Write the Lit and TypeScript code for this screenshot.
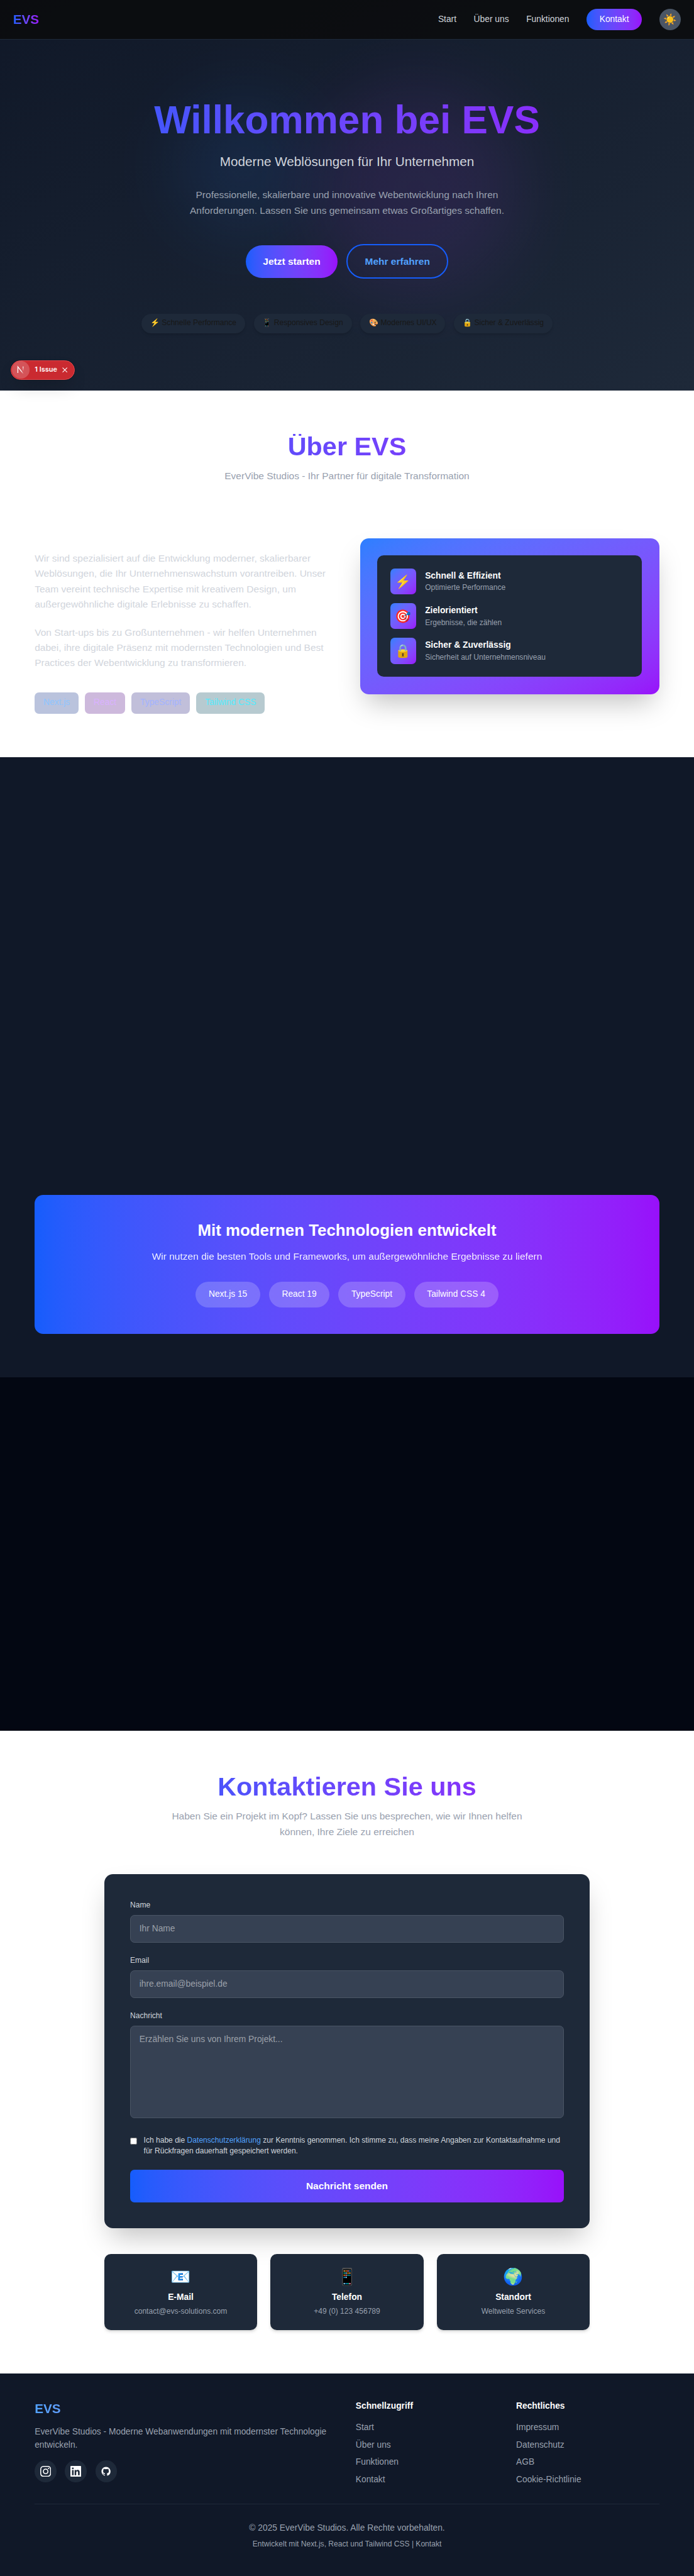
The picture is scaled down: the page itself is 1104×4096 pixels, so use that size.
import { LitElement, html, css, svg, unsafeCSS } from "lit";
import { customElement } from "lit/decorators.js";

const NAV_LINKS = ["Start", "Über uns", "Funktionen"];
const BADGES = [
  "⚡ Schnelle Performance",
  "📱 Responsives Design",
  "🎨 Modernes UI/UX",
  "🔒 Sicher & Zuverlässig",
];
const STRENGTHS = [
  { icon: "⚡", title: "Schnell & Effizient", text: "Optimierte Performance" },
  { icon: "🎯", title: "Zielorientiert", text: "Ergebnisse, die zählen" },
  { icon: "🔒", title: "Sicher & Zuverlässig", text: "Sicherheit auf Unternehmensniveau" },
];
const TAGS = [
  { label: "Next.js", tone: "blue" },
  { label: "React", tone: "purple" },
  { label: "TypeScript", tone: "indigo" },
  { label: "Tailwind CSS", tone: "cyan" },
];
const STACK = ["Next.js 15", "React 19", "TypeScript", "Tailwind CSS 4"];
const CHANNELS = [
  { icon: "📧", title: "E-Mail", text: "contact@evs-solutions.com" },
  { icon: "📱", title: "Telefon", text: "+49 (0) 123 456789" },
  { icon: "🌍", title: "Standort", text: "Weltweite Services" },
];
const FOOTER_COLUMNS = [
  { title: "Schnellzugriff", links: ["Start", "Über uns", "Funktionen", "Kontakt"] },
  { title: "Rechtliches", links: ["Impressum", "Datenschutz", "AGB", "Cookie-Richtlinie"] },
];
const SOCIAL = [
  "M12 2.163c3.204 0 3.584.012 4.85.07 3.252.148 4.771 1.691 4.919 4.919.058 1.265.069 1.645.069 4.849 0 3.205-.012 3.584-.069 4.849-.149 3.225-1.664 4.771-4.919 4.919-1.266.058-1.644.07-4.85.07-3.204 0-3.584-.012-4.849-.07-3.26-.149-4.771-1.699-4.919-4.92-.058-1.265-.07-1.644-.07-4.849 0-3.204.013-3.583.07-4.849.149-3.227 1.664-4.771 4.919-4.919 1.266-.057 1.645-.069 4.849-.069zm0-2.163c-3.259 0-3.667.014-4.947.072-4.358.2-6.78 2.618-6.98 6.98-.059 1.281-.073 1.689-.073 4.948 0 3.259.014 3.668.072 4.948.2 4.358 2.618 6.78 6.98 6.98 1.281.058 1.689.072 4.948.072 3.259 0 3.668-.014 4.948-.072 4.354-.2 6.782-2.618 6.979-6.98.059-1.28.073-1.689.073-4.948 0-3.259-.014-3.667-.072-4.947-.196-4.354-2.617-6.78-6.979-6.98-1.281-.059-1.69-.073-4.949-.073zm0 5.838c-3.403 0-6.162 2.759-6.162 6.162s2.759 6.163 6.162 6.163 6.162-2.759 6.162-6.163c0-3.403-2.759-6.162-6.162-6.162zm0 10.162c-2.209 0-4-1.79-4-4 0-2.209 1.791-4 4-4s4 1.791 4 4c0 2.21-1.791 4-4 4zm6.406-11.845c-.796 0-1.441.645-1.441 1.44s.645 1.44 1.441 1.44c.795 0 1.439-.645 1.439-1.44s-.644-1.44-1.439-1.44z",
  "M20.447 20.452h-3.554v-5.569c0-1.328-.027-3.037-1.852-3.037-1.853 0-2.136 1.445-2.136 2.939v5.667H9.351V9h3.414v1.561h.046c.477-.9 1.637-1.85 3.37-1.85 3.601 0 4.267 2.37 4.267 5.455v6.286zM5.337 7.433c-1.144 0-2.063-.926-2.063-2.065 0-1.138.92-2.063 2.063-2.063 1.14 0 2.064.925 2.064 2.063 0 1.139-.925 2.065-2.064 2.065zm1.782 13.019H3.555V9h3.564v11.452zM22.225 0H1.771C.792 0 0 .774 0 1.729v20.542C0 23.227.792 24 1.771 24h20.451C23.2 24 24 23.227 24 22.271V1.729C24 .774 23.2 0 22.222 0h.003z",
  "M12 2C6.477 2 2 6.484 2 12.017c0 4.425 2.865 8.18 6.839 9.504.5.092.682-.217.682-.483 0-.237-.008-.868-.013-1.703-2.782.605-3.369-1.343-3.369-1.343-.454-1.158-1.11-1.466-1.11-1.466-.908-.62.069-.608.069-.608 1.003.07 1.531 1.032 1.531 1.032.892 1.53 2.341 1.088 2.91.832.092-.647.35-1.088.636-1.338-2.22-.253-4.555-1.113-4.555-4.951 0-1.093.39-1.988 1.029-2.688-.103-.253-.446-1.272.098-2.65 0 0 .84-.27 2.75 1.026A9.564 9.564 0 0112 6.844c.85.004 1.705.115 2.504.337 1.909-1.296 2.747-1.027 2.747-1.027.546 1.379.202 2.398.1 2.651.64.7 1.028 1.595 1.028 2.688 0 3.848-2.339 4.695-4.566 4.943.359.309.678.92.678 1.855 0 1.338-.012 2.419-.012 2.747 0 .268.18.58.688.482A10.019 10.019 0 0022 12.017C22 6.484 17.522 2 12 2z",
];

/** The sheet is written on a 1280px-wide grid; every length is brought to the 1104px page. */
const SCALE = 1104 / 1280;
const scaled = (sheet: string) =>
  unsafeCSS(sheet.replace(/(-?\d*\.?\d+)px/g, (_m, n) => `${+(Number(n) * SCALE).toFixed(4)}px`));

@customElement("app-root")
export class AppRoot extends LitElement {
  static styles = [
    scaled(`
    :host {
      display: block;
      --brand: linear-gradient(to right in oklab, #155dfc, #9810fa);
      --brand-diagonal: linear-gradient(to bottom right in oklab, #2b7fff, #9810fa);
    }
    * {
      box-sizing: border-box;
    }
    h1, h2, h3, h4, p, ul {
      margin: 0;
      padding: 0;
      list-style: none;
    }
    a {
      color: inherit;
      text-decoration: none;
    }
    button {
      font: inherit;
      border: 0;
      padding: 0;
    }
    .page {
      position: relative;
      width: 1280px;
      overflow: hidden;
      font: 400 16px/24px "Liberation Sans", Arial, "Noto Color Emoji", sans-serif;
      color: #171717;
      background: #fff;
    }
    .gradient-text {
      background: var(--brand);
      -webkit-background-clip: text;
      background-clip: text;
      color: transparent;
    }

    /* Navigation */
    .nav {
      position: relative;
      z-index: 5;
      display: flex;
      align-items: center;
      justify-content: space-between;
      height: 73px;
      margin-bottom: -73px;
      padding: 0 24px;
      background: rgba(10, 10, 10, 0.8);
    }
    .brand {
      font-size: 24px;
      line-height: 32px;
      font-weight: 700;
    }
    .nav-links {
      display: flex;
      align-items: center;
      gap: 32px;
      color: #d1d5dc;
    }
    .nav-cta {
      padding: 8px 24px;
      border-radius: 999px;
      background: var(--brand);
      color: #fff;
    }
    .theme {
      width: 40px;
      height: 40px;
      border-radius: 50%;
      background: #4a5565;
      font-size: 20px;
      line-height: 28px;
      display: flex;
      align-items: center;
      justify-content: center;
    }

    /* Hero */
    .hero {
      position: relative;
      height: 720px;
      padding-top: 80px;
      display: flex;
      flex-direction: column;
      align-items: center;
      justify-content: center;
      text-align: center;
      background: linear-gradient(to bottom right in oklab, #101828, #1e2939);
    }
    .glow {
      position: absolute;
      border-radius: 50%;
      filter: blur(64px);
      opacity: 0.1;
    }
    .glow-blue {
      left: 25%;
      top: 25%;
      width: 256px;
      height: 256px;
      background: #2b7fff;
    }
    .glow-purple {
      right: 25%;
      bottom: 25%;
      width: 384px;
      height: 384px;
      background: #ad46ff;
    }
    .hero-inner {
      position: relative;
      width: 1152px;
    }
    .hero-title {
      font-size: 72px;
      line-height: 72px;
      font-weight: 700;
      margin-bottom: 24px;
    }
    .hero-sub {
      font-size: 24px;
      line-height: 32px;
      color: #d1d5dc;
      margin-bottom: 32px;
    }
    .hero-text {
      width: 672px;
      margin: 0 auto 48px;
      padding: 0 32px;
      font-size: 18px;
      line-height: 28px;
      color: #99a1af;
    }
    .hero-actions {
      display: flex;
      gap: 16px;
      align-items: center;
      justify-content: center;
      height: 64px;
      margin-bottom: 64px;
      font-size: 18px;
      line-height: 28px;
      font-weight: 600;
    }
    .primary {
      padding: 16px 32px;
      border-radius: 999px;
      background: var(--brand);
      color: #fff;
    }
    .secondary {
      padding: 15.7px 31.7px;
      border-radius: 999px;
      color: #51a2ff;
    }
    .badges {
      display: flex;
      justify-content: center;
      gap: 16px;
    }
    .badge {
      padding: 8px 16px;
      border-radius: 999px;
      background: #1e2939;
      font-size: 14px;
      line-height: 20px;
      box-shadow: 0 4px 6px -1px rgba(0, 0, 0, 0.1), 0 2px 4px -2px rgba(0, 0, 0, 0.1);
    }

    /* Issue indicator */
    .issue {
      position: absolute;
      z-index: 6;
      left: 20px;
      top: 664px;
      width: 118px;
      height: 36px;
      padding: 1px;
      display: flex;
      align-items: center;
      border-radius: 999px;
      background: #ca2a30;
      color: #fff;
      font: 600 12.7px/16px Inter, "Liberation Sans", sans-serif;
      box-shadow: 0 0 0 1px rgba(0, 0, 0, 0.17), 0 16px 32px -8px rgba(0, 0, 0, 0.24);
    }
    .issue-disc {
      width: 32px;
      height: 32px;
      border-radius: 50%;
      background: rgba(255, 255, 255, 0.2);
      margin-right: 10px;
    }
    .issue-logo {
      display: block;
      width: 32px;
      height: 32px;
    }
    .issue-text {
      width: 43px;
      white-space: nowrap;
    }
    .issue-close {
      display: block;
      width: 12px;
      height: 12px;
      margin-left: 7px;
    }

    /* Sections */
    .section {
      padding: 80px 64px;
    }
    .section-head {
      text-align: center;
      margin-bottom: 64px;
      font-size: 18px;
      line-height: 28px;
      color: #99a1af;
    }
    .section-title {
      font-size: 48px;
      line-height: 48px;
      font-weight: 700;
      margin-bottom: 16px;
    }
    .about {
      display: grid;
      grid-template-columns: 1fr 1fr;
      gap: 48px;
      align-items: center;
    }
    .about-copy {
      display: flex;
      flex-direction: column;
      gap: 24px;
      padding-top: 60px;
      font-size: 18px;
      line-height: 28px;
      color: #d1d5dc;
    }
    .tags {
      display: flex;
      gap: 12px;
      padding-top: 16px;
      font-size: 16px;
      line-height: 24px;
    }
    .tag {
      padding: 8px 16px;
      border-radius: 8px;
    }
    .blue { background: rgba(28, 57, 142, 0.3); color: #8ec5ff; }
    .purple { background: rgba(89, 22, 139, 0.3); color: #dab2ff; }
    .indigo { background: rgba(49, 44, 133, 0.3); color: #a3b3ff; }
    .cyan { background: rgba(16, 78, 100, 0.3); color: #53eafd; }
    .strengths {
      padding: 32px;
      border-radius: 16px;
      background: var(--brand-diagonal);
      box-shadow: 0 25px 50px -12px rgba(0, 0, 0, 0.25);
    }
    .strengths-inner {
      display: flex;
      flex-direction: column;
      gap: 16px;
      padding: 24px;
      border-radius: 12px;
      background: #1e2939;
    }
    .strength {
      display: flex;
      align-items: center;
      gap: 16px;
    }
    .strength-icon {
      display: flex;
      align-items: center;
      justify-content: center;
      width: 48px;
      height: 48px;
      border-radius: 8px;
      background: var(--brand-diagonal);
      font-size: 24px;
      line-height: 32px;
    }
    .item-title {
      font-size: 16px;
      line-height: 24px;
      font-weight: 600;
      color: #fff;
    }
    .item-text {
      font-size: 14px;
      line-height: 20px;
      color: #99a1af;
    }

    /* Technologies */
    .features {
      padding: 807px 64px 80px;
      background: #101828;
    }
    .tech {
      padding: 48px;
      border-radius: 16px;
      background: var(--brand);
      text-align: center;
      color: #fff;
    }
    .tech-title {
      font-size: 30px;
      line-height: 36px;
      font-weight: 700;
      margin-bottom: 16px;
    }
    .tech-text {
      font-size: 18px;
      line-height: 28px;
      margin-bottom: 32px;
      opacity: 0.9;
    }
    .chips {
      display: flex;
      justify-content: center;
      gap: 16px;
    }
    .chip {
      padding: 12px 24px;
      border-radius: 999px;
      background: rgba(255, 255, 255, 0.2);
    }
    .spacer {
      height: 652px;
      background: #030712;
    }

    /* Contact */
    .contact-sub {
      width: 672px;
      margin: 0 auto;
    }
    .narrow {
      width: 896px;
      margin: 0 auto;
    }
    .form {
      padding: 48px;
      margin-bottom: 48px;
      border-radius: 16px;
      background: #1e2939;
      box-shadow: 0 25px 50px -12px rgba(0, 0, 0, 0.25);
    }
    .label {
      display: block;
      margin-bottom: 8px;
      font-size: 14px;
      line-height: 20px;
      color: #d1d5dc;
    }
    .field {
      display: block;
      width: 100%;
      height: 50px;
      margin: 0 0 24px;
      padding: 12px 16px;
      border-radius: 8px;
      background: #364153;
      color: #fff;
      font: inherit;
      resize: none;
    }
    .field::placeholder {
      color: rgba(255, 255, 255, 0.5);
      opacity: 1;
    }
    .area {
      height: 170px;
      margin-bottom: 31px;
    }
    .consent {
      display: flex;
      align-items: flex-start;
      gap: 12px;
      margin-bottom: 24px;
      font-size: 14px;
      line-height: 20px;
      color: #d1d5dc;
    }
    .check {
      flex: none;
      width: 13px;
      height: 13px;
      margin: 5px 0 0;
    }
    .link {
      color: #51a2ff;
    }
    .submit {
      display: block;
      width: 100%;
      height: 60px;
      border-radius: 8px;
      background: var(--brand);
      color: #fff;
      font-size: 18px;
      line-height: 28px;
      font-weight: 600;
    }
    .channels {
      display: grid;
      grid-template-columns: repeat(3, 1fr);
      gap: 24px;
      text-align: center;
    }
    .channel {
      padding: 24px;
      border-radius: 12px;
      background: #1e2939;
      box-shadow: 0 4px 6px -1px rgba(0, 0, 0, 0.1), 0 2px 4px -2px rgba(0, 0, 0, 0.1);
    }
    .channel-icon {
      height: 36px;
      margin-bottom: 8px;
      font-size: 30px;
      line-height: 36px;
    }
    .channel .item-title {
      margin-bottom: 4px;
    }

    /* Footer */
    .footer {
      height: 373px;
      padding: 48px 64px 0;
      background: #101828;
      color: #99a1af;
    }
    .footer-grid {
      display: grid;
      grid-template-columns: 560px 264px 264px;
      column-gap: 32px;
      padding-bottom: 32px;
    }
    .footer-brand {
      margin-bottom: 16px;
      background-image: linear-gradient(to right in oklab, #51a2ff, #c27aff);
    }
    .social {
      display: flex;
      gap: 16px;
      margin-top: 16px;
    }
    .social-link {
      display: flex;
      align-items: center;
      justify-content: center;
      width: 40px;
      height: 40px;
      border-radius: 50%;
      background: #1e2939;
    }
    .social-icon {
      width: 20px;
      height: 20px;
    }
    .footer-links {
      display: flex;
      flex-direction: column;
      gap: 8px;
      margin-top: 16px;
    }
    .legal {
      padding-top: 32px;
      text-align: center;
    }
    .legal-small {
      margin-top: 8px;
      font-size: 14px;
      line-height: 20px;
    }
  `),
    /* Hairlines stay on whole device pixels. */
    css`
      .nav,
      .footer-grid {
        border-bottom: 1px solid #1e2939;
      }
      .secondary {
        border: 2px solid #155dfc;
      }
      .issue {
        border: 1px solid #e5484d;
      }
      .field {
        border: 1px solid #4a5565;
      }
    `,
  ];

  private renderHero() {
    return html`
      <nav class="nav">
        <div class="brand gradient-text">EVS</div>
        <div class="nav-links">
          ${NAV_LINKS.map((l) => html`<a>${l}</a>`)}
          <a class="nav-cta">Kontakt</a>
          <button class="theme">☀️</button>
        </div>
      </nav>
      <header class="hero">
        <div class="glow glow-blue"></div>
        <div class="glow glow-purple"></div>
        <div class="hero-inner">
          <h1 class="hero-title gradient-text">Willkommen bei EVS</h1>
          <p class="hero-sub">Moderne Weblösungen für Ihr Unternehmen</p>
          <p class="hero-text">
            Professionelle, skalierbare und innovative Webentwicklung nach Ihren
            Anforderungen. Lassen Sie uns gemeinsam etwas Großartiges schaffen.
          </p>
          <div class="hero-actions">
            <a class="primary">Jetzt starten</a>
            <a class="secondary">Mehr erfahren</a>
          </div>
          <div class="badges">${BADGES.map((b) => html`<span class="badge">${b}</span>`)}</div>
        </div>
      </header>
      <div class="issue">
        <div class="issue-disc">
          <svg class="issue-logo" viewBox="0 0 32 32" fill="none" stroke-width="1.5">
            <defs>
              <linearGradient id="diag" x1="11" y1="11" x2="21" y2="24" gradientUnits="userSpaceOnUse">
                <stop offset="0.6" stop-color="#fff" />
                <stop offset="1" stop-color="#fff" stop-opacity="0" />
              </linearGradient>
              <linearGradient id="stem" x1="0" y1="10" x2="0" y2="19" gradientUnits="userSpaceOnUse">
                <stop offset="0" stop-color="#fff" />
                <stop offset="1" stop-color="#fff" stop-opacity="0" />
              </linearGradient>
            </defs>
            <path d="M10.9 22V10.6L21.3 24" stroke="url(#diag)" />
            <path d="M20.6 10.2V19" stroke="url(#stem)" />
          </svg>
        </div>
        <span class="issue-text">1 Issue</span>
        <svg class="issue-close" viewBox="0 0 12 12" fill="none" stroke="#fff" stroke-width="1.2">
          <path d="M1.8 1.8l8.4 8.4M10.2 1.8L1.8 10.2" />
        </svg>
      </div>
    `;
  }

  private renderAbout() {
    return html`
      <section class="section">
        <div class="section-head">
          <h2 class="section-title gradient-text">Über EVS</h2>
          <p>EverVibe Studios - Ihr Partner für digitale Transformation</p>
        </div>
        <div class="about">
          <div class="about-copy">
            <p>
              Wir sind spezialisiert auf die Entwicklung moderner, skalierbarer Weblösungen, die Ihr
              Unternehmenswachstum vorantreiben. Unser Team vereint technische Expertise mit
              kreativem Design, um außergewöhnliche digitale Erlebnisse zu schaffen.
            </p>
            <p>
              Von Start-ups bis zu Großunternehmen - wir helfen Unternehmen dabei, ihre digitale
              Präsenz mit modernsten Technologien und Best Practices der Webentwicklung zu
              transformieren.
            </p>
            <div class="tags">
              ${TAGS.map((t) => html`<span class="tag ${t.tone}">${t.label}</span>`)}
            </div>
          </div>
          <div class="strengths">
            <div class="strengths-inner">
              ${STRENGTHS.map(
                (s) => html`
                  <div class="strength">
                    <div class="strength-icon">${s.icon}</div>
                    <div>
                      <h4 class="item-title">${s.title}</h4>
                      <p class="item-text">${s.text}</p>
                    </div>
                  </div>
                `
              )}
            </div>
          </div>
        </div>
      </section>
    `;
  }

  private renderTech() {
    return html`
      <section class="features">
        <div class="tech">
          <h3 class="tech-title">Mit modernen Technologien entwickelt</h3>
          <p class="tech-text">
            Wir nutzen die besten Tools und Frameworks, um außergewöhnliche Ergebnisse zu liefern
          </p>
          <div class="chips">${STACK.map((s) => html`<span class="chip">${s}</span>`)}</div>
        </div>
      </section>
      <section class="spacer"></section>
    `;
  }

  private renderContact() {
    return html`
      <section class="section">
        <div class="narrow">
          <div class="section-head">
            <h2 class="section-title gradient-text">Kontaktieren Sie uns</h2>
            <p class="contact-sub">
              Haben Sie ein Projekt im Kopf? Lassen Sie uns besprechen, wie wir Ihnen helfen können,
              Ihre Ziele zu erreichen
            </p>
          </div>
          <form class="form">
            <label class="label" for="name">Name</label>
            <input class="field" id="name" placeholder="Ihr Name" />
            <label class="label" for="email">Email</label>
            <input class="field" id="email" placeholder="ihre.email@beispiel.de" />
            <label class="label" for="message">Nachricht</label>
            <textarea class="field area" id="message" placeholder="Erzählen Sie uns von Ihrem Projekt..."></textarea>
            <label class="consent">
              <input class="check" type="checkbox" />
              <span
                >Ich habe die <a class="link">Datenschutzerklärung</a> zur Kenntnis genommen. Ich
                stimme zu, dass meine Angaben zur Kontaktaufnahme und für Rückfragen dauerhaft
                gespeichert werden.</span
              >
            </label>
            <button class="submit" type="button">Nachricht senden</button>
          </form>
          <div class="channels">
            ${CHANNELS.map(
              (c) => html`
                <div class="channel">
                  <div class="channel-icon">${c.icon}</div>
                  <h4 class="item-title">${c.title}</h4>
                  <p class="item-text">${c.text}</p>
                </div>
              `
            )}
          </div>
        </div>
      </section>
    `;
  }

  private renderFooter() {
    return html`
      <footer class="footer">
        <div class="footer-grid">
          <div>
            <h3 class="brand gradient-text footer-brand">EVS</h3>
            <p>EverVibe Studios - Moderne Webanwendungen mit modernster Technologie entwickeln.</p>
            <div class="social">
              ${SOCIAL.map(
                (d) => html`
                  <a class="social-link">
                    <svg class="social-icon" viewBox="0 0 24 24" fill="#fff">${svg`<path d=${d} />`}</svg>
                  </a>
                `
              )}
            </div>
          </div>
          ${FOOTER_COLUMNS.map(
            (c) => html`
              <div>
                <h4 class="item-title">${c.title}</h4>
                <ul class="footer-links">
                  ${c.links.map((l) => html`<li><a>${l}</a></li>`)}
                </ul>
              </div>
            `
          )}
        </div>
        <div class="legal">
          <p>© 2025 EverVibe Studios. Alle Rechte vorbehalten.</p>
          <p class="legal-small">Entwickelt mit Next.js, React und Tailwind CSS | Kontakt</p>
        </div>
      </footer>
    `;
  }

  render() {
    return html`
      <div class="page">
        ${this.renderHero()} ${this.renderAbout()} ${this.renderTech()} ${this.renderContact()}
        ${this.renderFooter()}
      </div>
    `;
  }
}
